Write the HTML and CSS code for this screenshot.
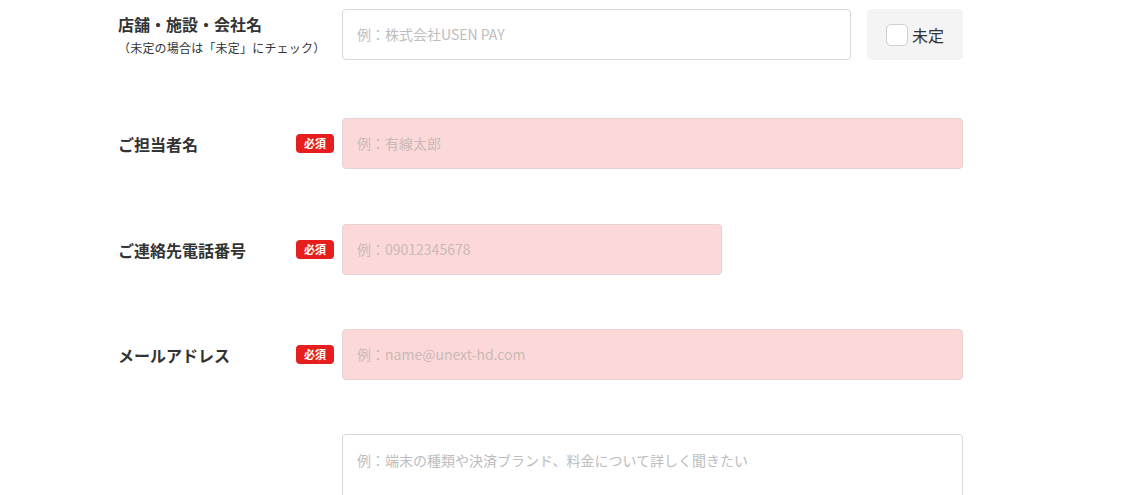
FILE: index.html
```html
<!DOCTYPE html>
<html lang="ja">
<head>
<meta charset="utf-8">
<link rel="stylesheet" href="styles.css">
</head>
<body>
<form class="form">
  <div class="row row-first">
    <div class="label">
      <div class="label-main">店舗・施設・会社名</div>
      <div class="label-sub">（未定の場合は「未定」にチェック）</div>
    </div>
    <div class="badge-slot"></div>
    <div class="field field-split">
      <div class="input input-shop">例：株式会社USEN PAY</div>
      <label class="undecided"><span class="checkbox"></span><span>未定</span></label>
    </div>
  </div>
  <div class="row row-second">
    <div class="label"><div class="label-main">ご担当者名</div></div>
    <div class="badge-slot"><span class="badge">必須</span></div>
    <div class="field"><div class="input input-req">例：有線太郎</div></div>
  </div>
  <div class="row">
    <div class="label"><div class="label-main">ご連絡先電話番号</div></div>
    <div class="badge-slot"><span class="badge">必須</span></div>
    <div class="field"><div class="input input-req input-tel">例：09012345678</div></div>
  </div>
  <div class="row">
    <div class="label"><div class="label-main">メールアドレス</div></div>
    <div class="badge-slot"><span class="badge">必須</span></div>
    <div class="field"><div class="input input-req">例：name@unext-hd.com</div></div>
  </div>
  <div class="row row-textarea">
    <div class="label"></div>
    <div class="badge-slot"></div>
    <div class="field"><div class="textarea">例：端末の種類や決済ブランド、料金について詳しく聞きたい</div></div>
  </div>
</form>
</body>
</html>
```

FILE: styles.css
```css
* { box-sizing: border-box; }
html, body { margin: 0; padding: 0; background: #fff; }
body {
  font-family: "Noto Sans CJK JP", "Noto Sans", sans-serif;
  color: #333;
  overflow: hidden;
  height: 495px;
}
.form {
  width: 845px;
  margin-left: 118px;
  padding-top: 9px;
}
.row {
  display: flex;
  align-items: center;
  margin-bottom: 54px;
}
.row-first { margin-bottom: 58px; align-items: flex-start; }
.row-first .label { padding-top: 3px; }
.row-second { margin-bottom: 55px; }
.row-textarea { align-items: flex-start; }
.label { width: 178px; flex: none; white-space: nowrap; }
.label-main {
  font-size: 16px;
  font-weight: bold;
  line-height: 24px;
}
.label-sub {
  font-size: 12px;
  line-height: 20px;
  margin-top: 2px;
  letter-spacing: 0.2px;
}
.badge-slot {
  width: 46px;
  flex: none;
}
.badge {
  display: block;
  width: 38px;
  height: 19px;
  background: #e61e1e;
  color: #fff;
  font-size: 11px;
  font-weight: bold;
  line-height: 19px;
  text-align: center;
  border-radius: 4px;
}
.field { width: 621px; flex: none; }
.field-split { display: flex; gap: 16px; }
.input {
  height: 51px;
  border: 1px solid #d8d8d8;
  border-radius: 4px;
  padding: 0 14px;
  font-size: 14px;
  line-height: 49px;
  color: #bdbdbd;
  background: #fff;
}
.input-shop { width: 509px; }
.input-req { background: #fcd9d8; color: #c9b9b9; border-color: #e5d3d3; }
.input-tel { width: 380px; }
.undecided {
  width: 96px;
  height: 51px;
  background: #f4f4f4;
  border-radius: 5px;
  display: flex;
  align-items: center;
  padding-left: 19px;
  gap: 4px;
  font-size: 16px;
  color: #333;
}
.checkbox {
  width: 22px;
  height: 22px;
  background: #fff;
  border: 1px solid #cfcfcf;
  border-radius: 5px;
}
.textarea {
  height: 120px;
  border: 1px solid #d8d8d8;
  border-radius: 4px;
  padding: 14px 14px;
  font-size: 14px;
  line-height: 22px;
  color: #bdbdbd;
}
```
